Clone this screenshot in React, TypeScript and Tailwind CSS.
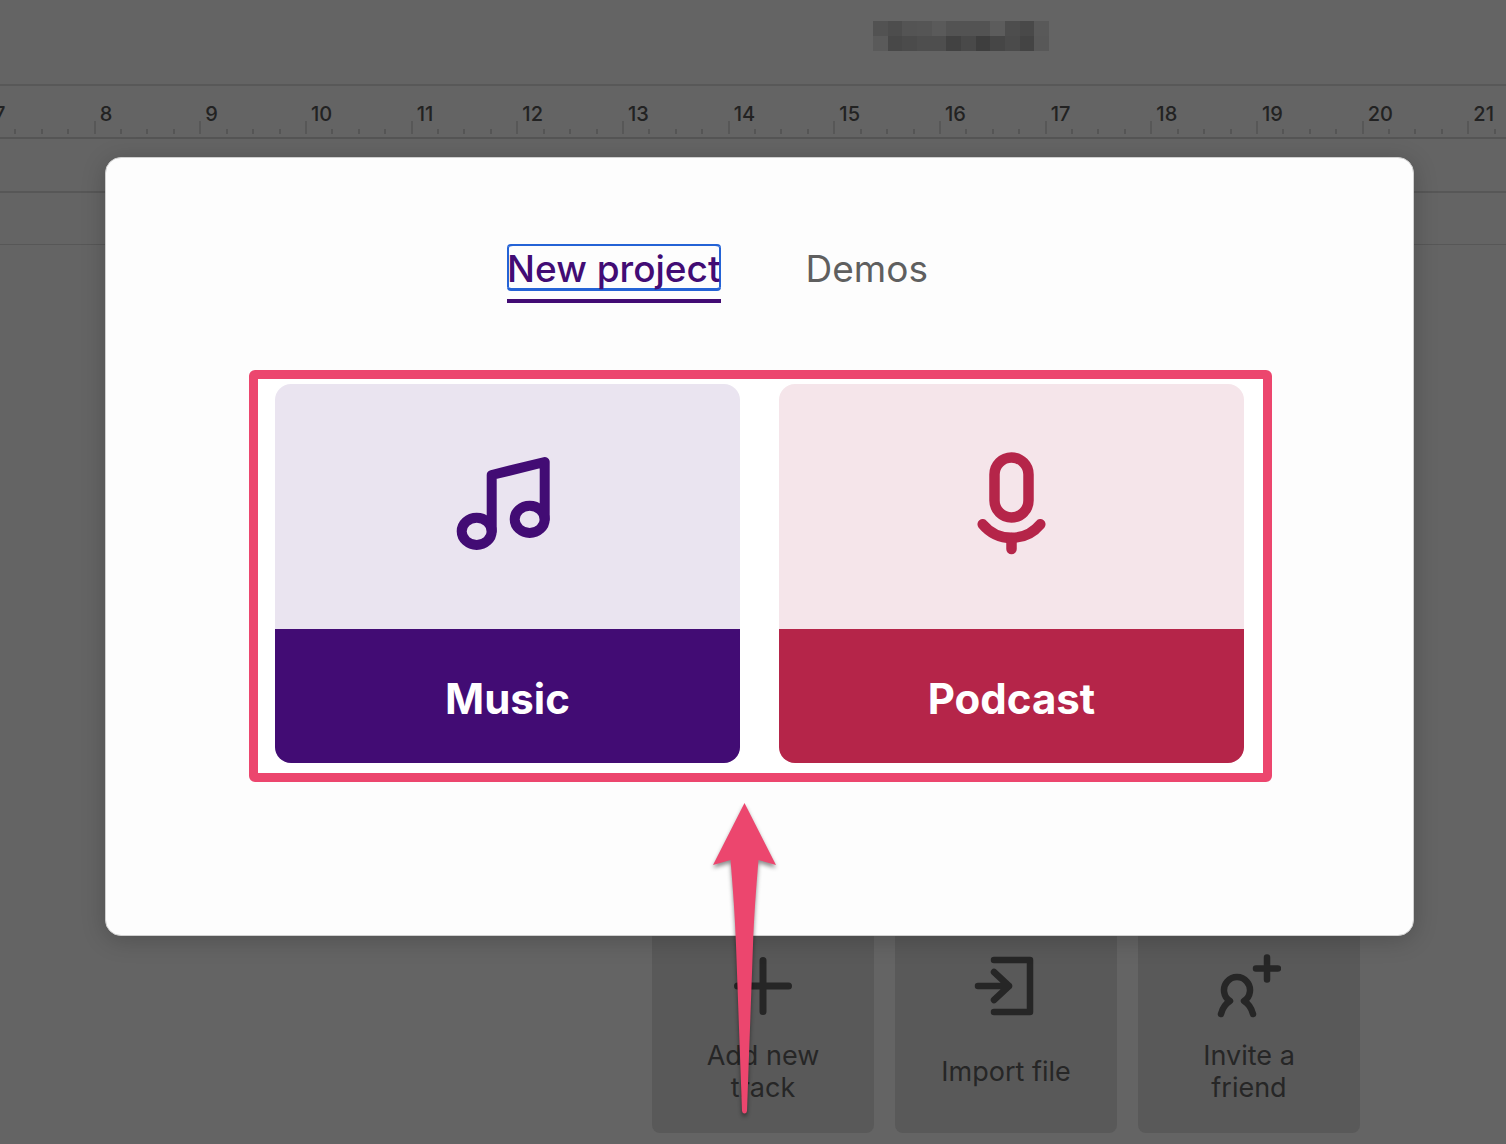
import { useState } from "react";
import type { ReactNode } from "react";

interface TrackAction {
  label: string;
  icon: ReactNode;
}

const tabs = ["New project", "Demos"];

const bars = [7, 8, 9, 10, 11, 12, 13, 14, 15, 16, 17, 18, 19, 20, 21];

// Masked project name, one colour per block, row by row
const maskBlocks = [
  "#525252", "#4d4d4d", "#545454", "#555555", "#5a5a5a", "#535353",
  "#535353", "#535353", "#5c5c5c", "#4d4d4d", "#494949", "#595959",
  "#5a5a5a", "#484848", "#4b4b4b", "#4e4e4e", "#4e4e4e", "#424242",
  "#494949", "#3e3e3e", "#464646", "#4b4b4b", "#444444", "#585858",
];

function MusicIcon() {
  return (
    <svg
      viewBox="0 0 105 105"
      className="size-[105px] overflow-visible"
      fill="none"
      stroke="#420c74"
      strokeWidth="10"
      strokeLinecap="round"
      strokeLinejoin="round"
      aria-hidden="true"
    >
      <ellipse cx="21.7" cy="77.3" rx="15" ry="13.6" />
      <ellipse cx="74.7" cy="65.3" rx="15" ry="13.6" />
      <path d="M36.7 77V21L89.7 8v57" />
    </svg>
  );
}

function MicIcon() {
  return (
    <svg
      viewBox="0 0 105 105"
      className="size-[105px] overflow-visible"
      fill="none"
      stroke="#b52549"
      strokeWidth="10.5"
      strokeLinecap="round"
      aria-hidden="true"
    >
      <rect x="35.5" y="3.5" width="34" height="60" rx="17" />
      <path d="M23.7 70.3A37.5 37.5 0 0 0 81.3 70.3" />
      <path d="M52.5 84v11" />
    </svg>
  );
}

const actions: TrackAction[] = [
  {
    label: "Add new track",
    icon: <path d="M32 6.5v51M6.5 32h51" strokeWidth="7" />,
  },
  {
    label: "Import file",
    icon: <path d="M20 6h36v52H20M4 32h31M20 18l15 14-15 14" />,
  },
  {
    label: "Invite a friend",
    icon: (
      <path d="M4 60C5.5 54 8 50 13 47A13 13 0 1 1 27 47C32 50 34.5 54 36 60M50 3.5v22M39 14.5h22" />
    ),
  },
];

function Ruler() {
  return (
    <div className="overflow-hidden border-b-2 border-[#555555] pb-[3px]">
      <div className="-ml-3 grid w-[1585px] grid-cols-15">
        {bars.map((bar) => (
          <div key={bar} className="relative grid h-12 grid-cols-4 items-end">
            <span className="absolute top-4 left-1.5 text-[20px] leading-6 font-medium text-[#222222]">
              {bar}
            </span>
            <i className="h-[13px] border-l-2 border-[#575757]" />
            <i className="h-[5px] border-l-2 border-[#555555]" />
            <i className="h-[5px] border-l-2 border-[#555555]" />
            <i className="h-[5px] border-l-2 border-[#555555]" />
          </div>
        ))}
      </div>
    </div>
  );
}

function Editor() {
  return (
    <div className="flex min-h-screen flex-col bg-[#646464]">
      <header className="flex h-[86px] items-start justify-center border-b-2 border-[#585858] pt-[21px] pl-[416px]">
        <div className="grid w-44 grid-cols-12 grid-rows-2">
          {maskBlocks.map((color, i) => (
            <span key={i} className="h-[15px]" style={{ backgroundColor: color }} />
          ))}
        </div>
      </header>

      <Ruler />
      <div className="h-[54px] border-b-2 border-[#575757]" />
      <div className="h-[52px] border-b border-[#575757]" />

      <main className="flex flex-1 items-end justify-center gap-[21px] pb-[11px] pl-[506px]">
        {actions.map((action) => (
          <button
            key={action.label}
            type="button"
            className="flex h-[222px] w-[222px] flex-col items-center rounded-lg bg-[#595959] pt-[43px] text-[#262626]"
          >
            <svg
              viewBox="0 0 64 64"
              className="size-16 shrink-0"
              fill="none"
              stroke="currentColor"
              strokeWidth="6.5"
              strokeLinecap="round"
              strokeLinejoin="round"
              aria-hidden="true"
            >
              {action.icon}
            </svg>
            <span className="mt-[22px] flex h-16 w-[140px] items-center justify-center text-[27px] leading-8">
              {action.label}
            </span>
          </button>
        ))}
      </main>
    </div>
  );
}

function NewProjectDialog() {
  const [activeTab, setActiveTab] = useState("New project");

  return (
    <div className="absolute inset-x-0 top-[157px] pr-[92px] pl-[105px]">
      <div
        role="dialog"
        aria-label="New project"
        className="rounded-2xl border border-[#d0d0d0] bg-[#fdfdfd] pt-[86px] pr-[141px] pb-[153px] pl-[143px] shadow-[0_4px_24px_rgba(0,0,0,0.2)]"
      >
        <div role="tablist" className="flex justify-center gap-[85px] pr-[86px]">
          {tabs.map((tab) => (
            <button
              key={tab}
              type="button"
              role="tab"
              aria-selected={activeTab === tab}
              onClick={() => setActiveTab(tab)}
              className={`border-b-4 pb-2 text-[37px] leading-[38px] ${
                activeTab === tab
                  ? "border-[#420c74] font-medium text-[#420c74]"
                  : "border-transparent text-[#5f5f5f]"
              }`}
            >
              <span
                className={`block rounded-sm border-t-2 border-b-3 pt-1 ${
                  activeTab === tab
                    ? "border-[#2463d6] shadow-[inset_2px_0_#2463d6,inset_-2px_0_#2463d6]"
                    : "border-transparent"
                }`}
              >
                {tab}
              </span>
            </button>
          ))}
        </div>

        {/* Highlighted choices */}
        <div className="mt-[67px] flex gap-[39px] rounded-md border-9 border-[#ec466e] bg-white pt-[5px] pr-[19px] pb-[10px] pl-[17px]">
          <button type="button" className="flex-1 overflow-hidden rounded-2xl bg-[#eae4f0]">
            <span className="flex h-[245px] items-center justify-center">
              <MusicIcon />
            </span>
            <span className="flex h-[134px] items-center justify-center bg-[#420c74] pt-1 text-[42px] font-bold text-white">
              Music
            </span>
          </button>
          <button type="button" className="flex-1 overflow-hidden rounded-2xl bg-[#f5e5ea]">
            <span className="flex h-[245px] items-center justify-center">
              <MicIcon />
            </span>
            <span className="flex h-[134px] items-center justify-center bg-[#b52549] pt-1 text-[42px] font-bold text-white">
              Podcast
            </span>
          </button>
        </div>
      </div>
    </div>
  );
}

function PointerArrow() {
  return (
    <svg
      viewBox="0 0 80 330"
      className="pointer-events-none absolute top-[795px] left-[704px] h-[330px] w-20 drop-shadow-[0_3px_2px_rgba(0,0,0,0.45)]"
      fill="#ec466e"
      aria-hidden="true"
    >
      <path d="M40.5 8L72 70L54.5 65C52 95 50 122 49 150L43 316Q42.5 318.5 40.5 318.5T38 316L32 150C31 122 29 95 26.5 65L9 70Z" />
    </svg>
  );
}

export default function App() {
  return (
    <div className="relative overflow-hidden font-['Inter','Liberation_Sans',sans-serif]">
      <Editor />
      <NewProjectDialog />
      <PointerArrow />
    </div>
  );
}
